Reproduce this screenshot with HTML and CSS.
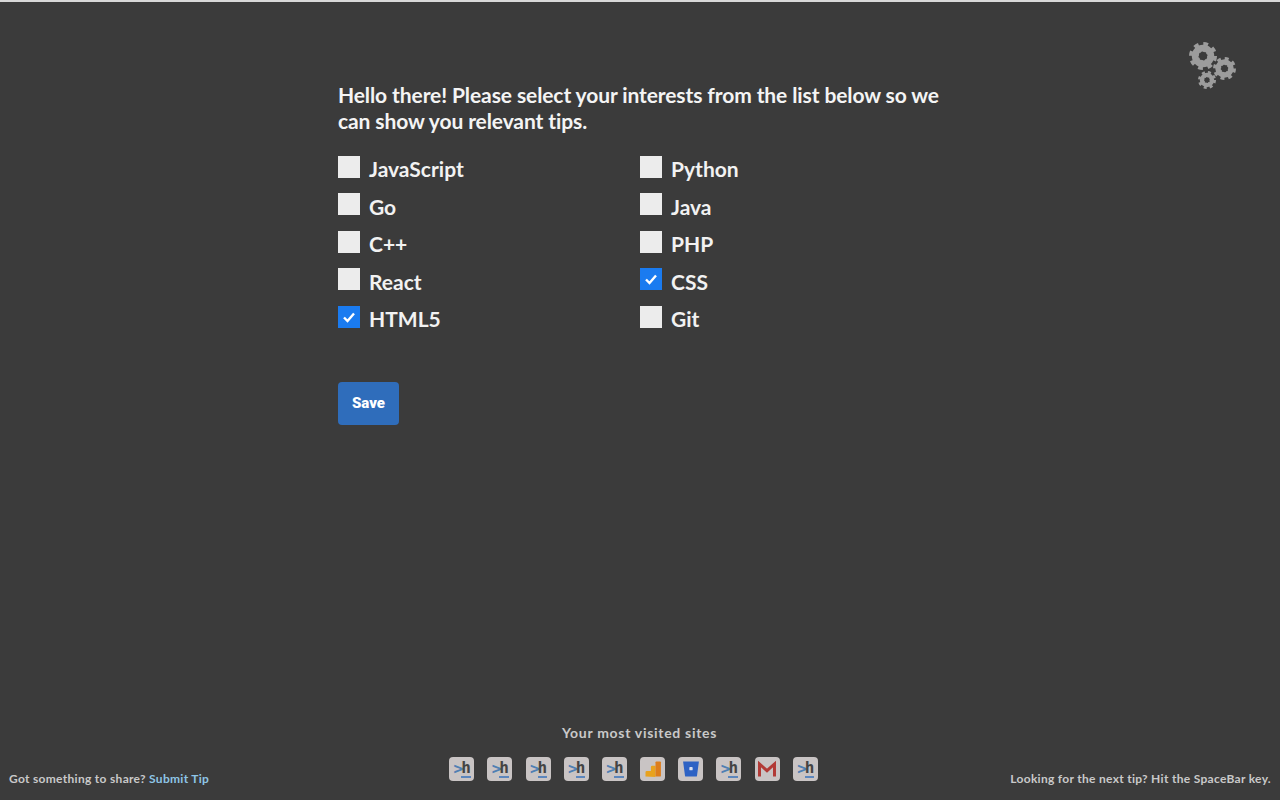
FILE: index.html
```html
<!DOCTYPE html>
<html lang="en">
<head>
  <meta charset="UTF-8">
  <meta name="viewport" content="width=device-width, initial-scale=1.0">
  <title>New Tab</title>
  <link rel="stylesheet" href="styles.css">
</head>
<body>
  <svg class="defs" width="0" height="0">
    <symbol id="gear" viewBox="0 0 40 40">
      <circle cx="20" cy="20" r="13" fill="none" stroke="#9c9c9c" stroke-width="14" stroke-dasharray="5.1 5.1"/>
      <path fill="#9c9c9c" fill-rule="evenodd" d="M20 4a16 16 0 1 0 0 32a16 16 0 1 0 0-32zM20 13.500a6.500 6.500 0 1 1 0 13a6.500 6.500 0 1 1 0-13z"/>
    </symbol>
  </svg>

  <div class="settings">
    <svg class="gear gear-big"><use href="#gear"/></svg>
    <svg class="gear gear-mid"><use href="#gear"/></svg>
    <svg class="gear gear-small"><use href="#gear"/></svg>
  </div>

  <div class="main">
    <h1 class="title">Hello there! Please select your interests from the list below so we can show you relevant tips.</h1>
    <div class="topics">
      <div class="topic"><span class="box"></span>JavaScript</div>
      <div class="topic"><span class="box"></span>Python</div>
      <div class="topic"><span class="box"></span>Go</div>
      <div class="topic"><span class="box"></span>Java</div>
      <div class="topic"><span class="box"></span>C++</div>
      <div class="topic"><span class="box"></span>PHP</div>
      <div class="topic"><span class="box"></span>React</div>
      <div class="topic"><span class="box checked"><svg class="tick" viewBox="0 0 22 22"><path d="M6 11.500l3.500 3.500l6.500-7.500"/></svg></span>CSS</div>
      <div class="topic"><span class="box checked"><svg class="tick" viewBox="0 0 22 22"><path d="M6 11.500l3.500 3.500l6.500-7.500"/></svg></span>HTML5</div>
      <div class="topic"><span class="box"></span>Git</div>
    </div>
    <button class="save">Save</button>
  </div>

  <div class="footer">
    <div class="share">Got something to share? <a class="link">Submit Tip</a></div>
    <div class="sites">
      <div class="sites-title">Your most visited sites</div>
      <div class="site-list">
        <div class="site"><span class="gt">&gt;</span><span class="h">h</span></div>
        <div class="site"><span class="gt">&gt;</span><span class="h">h</span></div>
        <div class="site"><span class="gt">&gt;</span><span class="h">h</span></div>
        <div class="site"><span class="gt">&gt;</span><span class="h">h</span></div>
        <div class="site"><span class="gt">&gt;</span><span class="h">h</span></div>
        <div class="site">
          <svg class="site-icon" viewBox="0 0 24 24">
            <path fill="#e8a21e" d="M3 21v-5q0-1.500 1.500-1.500h5v-5q0-1.500 1.500-1.500h4v13.500z"/>
            <rect x="15" y="3" width="6.500" height="18" rx="1" fill="#dd7d1c"/>
          </svg>
        </div>
        <div class="site">
          <svg class="site-icon" viewBox="0 0 24 24">
            <path fill="#2d62c4" d="M2.500 3h19l-2.300 17q-.1 1-1 1h-12.400q-.9 0-1-1z"/>
            <rect x="10" y="9.500" width="4" height="4" rx="1" fill="#d9dfee"/>
          </svg>
        </div>
        <div class="site"><span class="gt">&gt;</span><span class="h">h</span></div>
        <div class="site">
          <svg class="site-icon" viewBox="0 0 24 24">
            <path fill="none" stroke="#b23a36" stroke-width="3.600" d="M3 21V6l9 8l9-8v15"/>
          </svg>
        </div>
        <div class="site"><span class="gt">&gt;</span><span class="h">h</span></div>
      </div>
    </div>
    <div class="next">Looking for the next tip? Hit the SpaceBar key.</div>
  </div>
</body>
</html>
```

FILE: styles.css
```css
html, body {
  height: 100%;
}
body {
  margin: 0;
  background: #3b3b3b;
  border-top: 2px solid #d8d8d8;
  box-sizing: border-box;
  display: flex;
  flex-direction: column;
  font-family: "Lato", sans-serif;
  color: #fff;
  position: relative;
  overflow: hidden;
}
.defs {
  position: absolute;
}
.settings {
  position: absolute;
  top: 38px;
  right: 43px;
  width: 48px;
  height: 52px;
}
.gear {
  position: absolute;
}
.gear-big {
  left: 0;
  top: 2px;
  width: 28px;
  height: 28px;
}
.gear-mid {
  left: 24px;
  top: 17px;
  width: 23px;
  height: 23px;
}
.gear-small {
  left: 9px;
  top: 31px;
  width: 18px;
  height: 18px;
}
.main {
  flex: 1;
  margin-left: 338px;
  width: 620px;
  padding-top: 80px;
}
.title {
  margin: 0 0 16px;
  font-size: 21px;
  line-height: 26px;
  font-weight: 700;
  letter-spacing: -.1px;
  color: #f4f4f4;
}
.topics {
  display: grid;
  grid-template-columns: 302px 302px;
  grid-auto-rows: 37.500px;
}
.topic {
  display: flex;
  align-items: center;
  gap: 9px;
  font-size: 21px;
  font-weight: 700;
  color: #f2f2f2;
  height: 37.500px;
}
.box {
  width: 22px;
  height: 22px;
  background: #ececec;
  margin-top: -4px;
  flex-shrink: 0;
}
.checked {
  background: #1a7bf0;
}
.tick {
  display: block;
  width: 22px;
  height: 22px;
  fill: none;
  stroke: #fff;
  stroke-width: 2.400;
}
.save {
  display: block;
  margin-top: 44px;
  width: 61px;
  height: 43px;
  padding: 0;
  border: none;
  border-radius: 4px;
  background: #2f6dbb;
  color: #fff;
  font-family: "Roboto", sans-serif;
  font-size: 15px;
  font-weight: 900;
  cursor: pointer;
}
.footer {
  display: flex;
  justify-content: space-between;
  align-items: flex-end;
  padding: 0 9px 14px;
  height: 68px;
  color: #c9c9c9;
  font-size: 12px;
  font-weight: 700;
}
.link {
  color: #8ec5e6;
}
.share, .next {
  width: 300px;
  letter-spacing: .3px;
}
.next {
  text-align: right;
}
.sites {
  text-align: center;
  margin-bottom: 5px;
  margin-left: -13px;
}
.sites-title {
  font-size: 14px;
  letter-spacing: .7px;
  margin-bottom: 16px;
  padding-left: 12px;
}
.site-list {
  display: flex;
  gap: 13.200px;
}
.site {
  width: 25px;
  height: 24px;
  background: #c9c4c4;
  border-radius: 4px;
  display: flex;
  align-items: center;
  justify-content: center;
  font-family: "DejaVu Sans Mono", monospace;
  font-size: 16px;
  line-height: 1;
  overflow: hidden;
}
.gt {
  color: #4f7fb3;
  margin-right: -2px;
}
.h {
  color: #444;
  font-weight: 700;
  border-bottom: 2px solid #5b86bd;
  height: 16px;
  margin-right: -1px;
}
.site-icon {
  width: 20px;
  height: 20px;
}
```
